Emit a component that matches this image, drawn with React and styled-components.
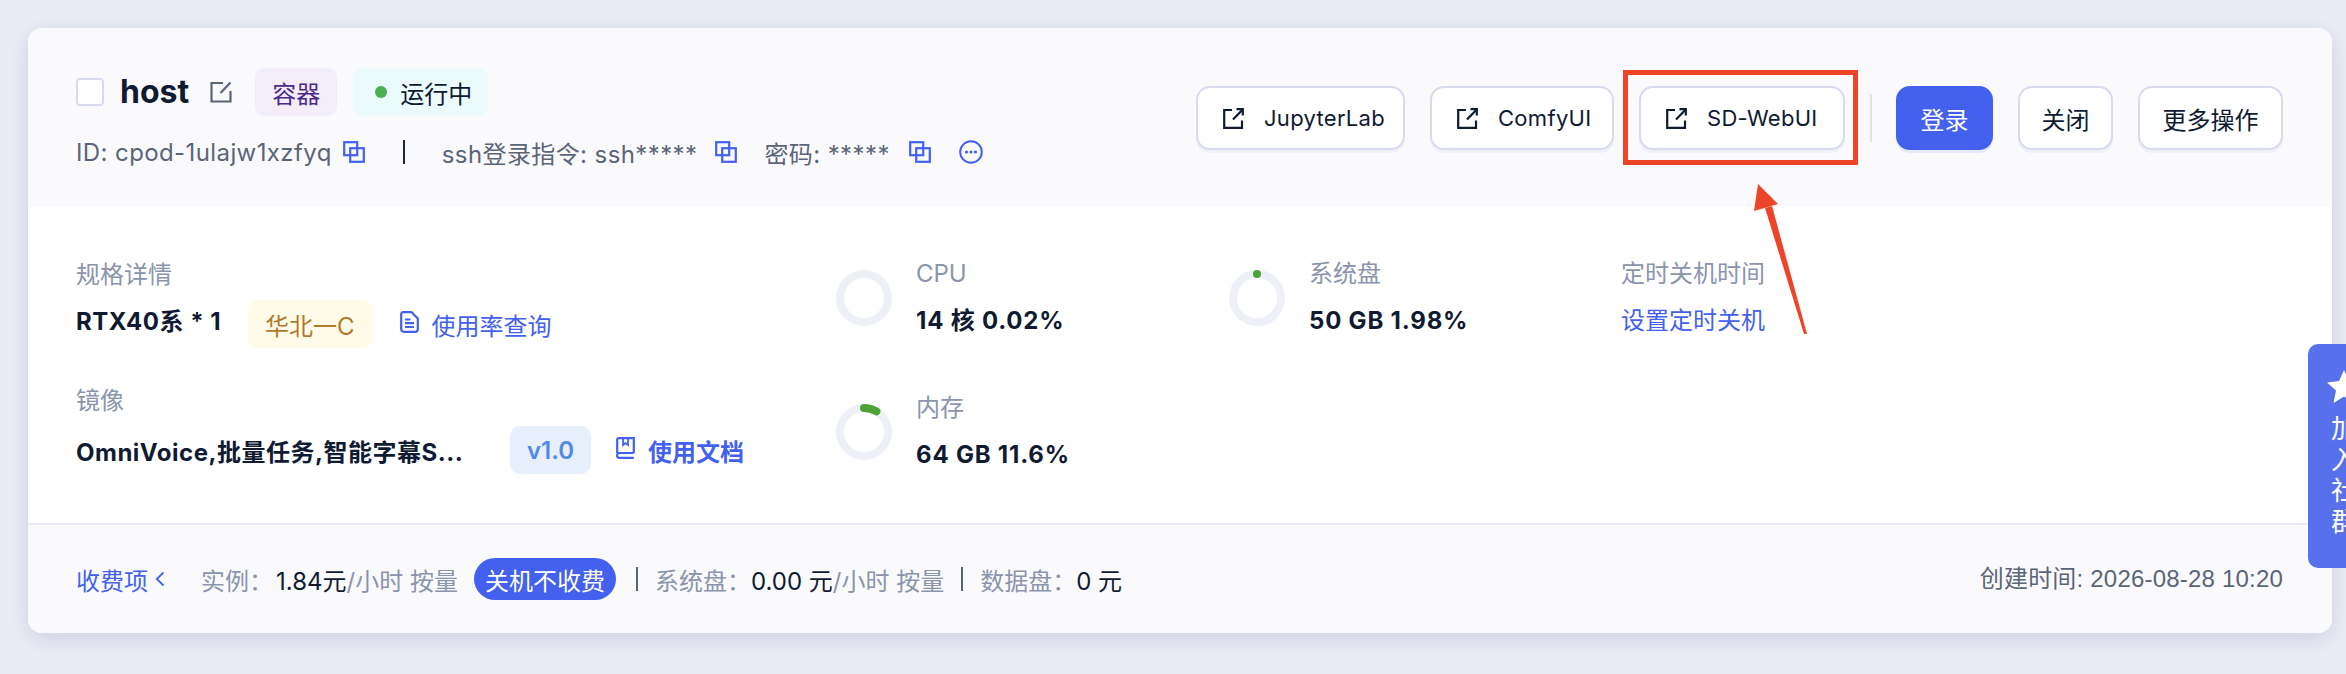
import React from 'react';
import styled, { createGlobalStyle } from 'styled-components';

const GlobalStyle = createGlobalStyle`
  html, body {
    margin: 0;
    padding: 0;
    background: #eaecf5;
  }
  body {
    font-family: "Inter", "Noto Sans CJK SC", sans-serif;
    color: #0f1a33;
    overflow: hidden;
  }
  * {
    box-sizing: border-box;
  }
`;

const Page = styled.div`
  position: relative;
  width: 2346px;
  height: 674px;
  padding: 28px 14px 0 28px;
  overflow: hidden;
`;

const Card = styled.div`
  position: relative;
  height: 605px;
  border-radius: 14px;
  background: #fff;
  box-shadow: 0 6px 24px rgba(70, 80, 130, 0.17);
`;

const Header = styled.header`
  display: flex;
  align-items: flex-start;
  justify-content: space-between;
  height: 179px;
  padding: 40px 49px 0 48px;
  background: #fafafd;
  border-radius: 14px 14px 0 0;
`;

const HeaderInfo = styled.div`
  display: flex;
  flex-direction: column;
  gap: 21px;
`;

const TitleRow = styled.div`
  display: flex;
  align-items: center;
  height: 48px;
`;

const Checkbox = styled.span`
  width: 28px;
  height: 28px;
  border: 2px solid #d8dbee;
  border-radius: 4px;
  background: #fff;
`;

const HostName = styled.h1`
  margin: 0 0 0 16px;
  font-size: 32px;
  font-weight: 700;
  line-height: 40px;
`;

const EditButton = styled.span`
  display: flex;
  margin: 0 23px 0 21px;
`;

const Tag = styled.span`
  display: inline-flex;
  align-items: center;
  height: 48px;
  padding: 0 ${props => props.$pad || 17}px;
  margin-right: ${props => props.$mr || 0}px;
  border-radius: 10px;
  font-size: 24px;
  font-weight: ${props => props.$weight || 400};
  background: ${props => props.$bg};
  color: ${props => props.$color};
  white-space: nowrap;
`;

const StatusTag = styled(Tag)`
  padding: 0 16px 0 22px;
`;

const Dot = styled.i`
  width: 12px;
  height: 12px;
  margin-right: 13px;
  border-radius: 50%;
  background: #4caf50;
`;

const MetaRow = styled.div`
  display: flex;
  align-items: center;
  height: 30px;
  font-size: 24px;
  letter-spacing: 0.4px;
  color: #5b6579;
  white-space: nowrap;
`;

const MetaIcon = styled.span`
  display: flex;
  margin-left: ${props => props.$ml || 0}px;
  margin-right: ${props => props.$mr || 0}px;
`;

const VLine = styled.span`
  width: 2px;
  height: 24px;
  margin: 0 37px 0 38px;
  background: #1d2740;
`;

const Actions = styled.div`
  display: flex;
  align-items: flex-start;
  gap: 25px;
  padding-top: 18px;
`;

const ActionButton = styled.button`
  display: flex;
  align-items: center;
  justify-content: center;
  width: ${props => props.$width}px;
  height: 64px;
  padding: 0;
  border: 2px solid ${props => (props.$primary ? '#4361ee' : '#d8dbee')};
  border-radius: 14px;
  background: ${props => (props.$primary ? '#4361ee' : '#fff')};
  box-shadow: 0 3px 0 ${props => (props.$primary ? '#e6e9fa' : '#eff0f8')};
  color: ${props => (props.$primary ? '#fff' : '#0f1a33')};
  font-family: inherit;
  font-size: 24px;
  white-space: nowrap;
`;

const LinkButton = styled(ActionButton)`
  justify-content: flex-start;
  gap: 20px;
  padding-left: 25px;
  font-size: 22px;
  letter-spacing: 0.3px;
`;

const ActionDivider = styled.span`
  width: 2px;
  height: 48px;
  margin: 8px -1px 0 0;
  background: #dfe1f0;
`;

const Body = styled.section`
  display: flex;
  height: 316px;
  padding: 52px 0 0 48px;
`;

const SpecColumn = styled.div`
  display: flex;
  flex-direction: column;
  width: 760px;
`;

const SpecLabel = styled.div`
  margin-top: ${props => props.$mt || 0}px;
  font-size: 24px;
  line-height: 30px;
  color: #8a94ad;
`;

const SpecRow = styled.div`
  display: flex;
  align-items: center;
  height: 48px;
  margin-top: ${props => props.$mt || 10}px;
`;

const SpecName = styled.span`
  width: ${props => props.$width}px;
  margin-bottom: ${props => props.$raise || 0}px;
  font-size: 24px;
  font-weight: 700;
  letter-spacing: 0.5px;
  white-space: nowrap;
`;

const DocLink = styled.a`
  display: inline-flex;
  align-items: center;
  gap: 13px;
  margin-left: ${props => props.$ml}px;
  color: #4361ee;
  font-size: 24px;
  font-weight: ${props => props.$weight || 400};

  svg {
    margin-bottom: 4px;
  }
`;

const Stats = styled.div`
  display: grid;
  grid-template-columns: 393px 392px auto;
  grid-template-rows: 134px 134px;
  justify-content: start;
`;

const StatCell = styled.div`
  display: flex;
  align-items: flex-start;
  gap: 24px;
`;

const Ring = styled.svg`
  flex: none;
  margin-top: 11px;
`;

const StatText = styled.div`
  display: flex;
  flex-direction: column;
  gap: 17px;
  font-size: 24px;
  line-height: 30px;
  white-space: nowrap;
`;

const StatLabel = styled.span`
  color: #8a94ad;
`;

const StatValue = styled.span`
  font-weight: 700;
  letter-spacing: 0.8px;
`;

const StatLink = styled.a`
  color: #4361ee;
`;

const Footer = styled.footer`
  display: flex;
  align-items: center;
  justify-content: space-between;
  height: 110px;
  padding: 0 49px 0 48px;
  border-top: 2px solid #e9eaf3;
  border-radius: 0 0 14px 14px;
  background: #fafafc;
  font-size: 24px;
  white-space: nowrap;
`;

const FeeList = styled.div`
  display: flex;
  align-items: center;
  color: #8a94ad;
`;

const FeeToggle = styled.a`
  display: inline-flex;
  align-items: center;
  gap: 7px;
  margin-right: 36px;
  color: #4361ee;
`;

const FeeValue = styled.span`
  margin-left: ${props => props.$ml || 0}px;
  color: #0f1a33;
`;

const FreePill = styled.span`
  display: inline-flex;
  align-items: center;
  height: 42px;
  margin: 0 20px 0 16px;
  padding: 0 11px;
  border-radius: 21px;
  background: #4361ee;
  color: #fff;
`;

const FeeDivider = styled.span`
  width: 2px;
  height: 24px;
  margin: 0 17px 0 0;
  background: #5b6579;
`;

const FeeSep = styled(FeeDivider)`
  margin: 0 17px 0 17px;
`;

const CreatedAt = styled.span`
  margin-bottom: 5px;
  font-family: "Liberation Sans", "Noto Sans CJK SC", sans-serif;
  letter-spacing: 0.2px;
  color: #5b6579;
`;

const SideTab = styled.aside`
  position: absolute;
  top: 344px;
  right: 0;
  width: 38px;
  height: 224px;
  padding: 26px 0 0 19px;
  overflow: hidden;
  border-radius: 10px 0 0 10px;
  background: #5870ec;
  color: #fff;
  font-size: 26px;
  line-height: 31px;
`;

const SideText = styled.div`
  width: 26px;
  margin: 4px 0 0 4px;
`;

const RedBox = styled.div`
  position: absolute;
  left: 1595px;
  top: 42px;
  width: 235px;
  height: 95px;
  border: 5px solid #ee4528;
`;

const Arrow = styled.svg`
  position: absolute;
  left: 1720px;
  top: 150px;
`;

const BLUE = '#4361ee';

const CopyIcon = () => (
  <svg width="22" height="22" viewBox="0 0 22 22" fill="none" stroke={BLUE} strokeWidth="2.2">
    <rect x="1.2" y="1.2" width="13" height="13" />
    <rect x="7.2" y="7.2" width="13.6" height="13.6" />
  </svg>
);

const MoreIcon = () => (
  <svg width="24" height="24" viewBox="0 0 24 24" fill="none" stroke={BLUE} strokeWidth="2">
    <circle cx="12" cy="12" r="10.8" />
    <g fill={BLUE} stroke="none">
      <circle cx="7.5" cy="12" r="1.6" />
      <circle cx="12" cy="12" r="1.6" />
      <circle cx="16.5" cy="12" r="1.6" />
    </g>
  </svg>
);

const EditIcon = () => (
  <svg width="22" height="22" viewBox="0 0 22 22" fill="none" stroke="#5b6579" strokeWidth="2.2">
    <path d="M13 2H1.5v18.5H20.5V10" />
    <path d="M10.5 12L20.5 1.5" />
  </svg>
);

const ExternalIcon = () => (
  <svg width="21" height="21" viewBox="0 0 21 21" fill="none" stroke="#0f1a33" strokeWidth="2.2">
    <path d="M9 2H1.2V19.8H19V12.5" />
    <path d="M10 11.5L19.5 1.8" />
    <path d="M13.5 1.2H19.8V7.5" />
  </svg>
);

const DocIcon = () => (
  <svg width="19" height="22" viewBox="0 0 19 22" fill="none" stroke={BLUE} strokeWidth="2.2">
    <path d="M3 1.2H11.5L17.8 7.5V18.3a2.5 2.5 0 0 1-2.5 2.5H3.7a2.5 2.5 0 0 1-2.5-2.5V3a1.8 1.8 0 0 1 1.8-1.8Z" />
    <path d="M5 8.5H10.5M5 12.2H14M5 16H14" />
  </svg>
);

const BookIcon = () => (
  <svg width="19" height="22" viewBox="0 0 19 22" fill="none" stroke={BLUE} strokeWidth="2.2">
    <path d="M1.2 16V2.7a1.5 1.5 0 0 1 1.5-1.5H17.8V16" />
    <path d="M17.8 16H3.5a2.4 2.4 0 0 0 0 4.8H17.8" />
    <path d="M7 1.5V8L9.500 6.200L12 8V1.500" strokeWidth="1.800" />
  </svg>
);

const UsageRing = ({ percent }) => {
  const r = 24;
  const length = 2 * Math.PI * r;
  // the round caps already add length, so the dash is trimmed a little
  const dash = Math.max(0, (length * percent) / 100 - 4.5);
  return (
    <Ring width="56" height="56" viewBox="0 0 56 56" fill="none" strokeWidth="8">
      <circle cx="28" cy="28" r={r} stroke="#eef0f8" />
      {percent > 0.1 && (
        <circle
          cx="28"
          cy="28"
          r={r}
          stroke="#4ca336"
          strokeLinecap="round"
          strokeDasharray={`${dash} ${length}`}
          transform="rotate(-90 28 28)"
        />
      )}
    </Ring>
  );
};

const Stat = ({ label, value, percent }) => (
  <StatCell>
    <UsageRing percent={percent} />
    <StatText>
      <StatLabel>{label}</StatLabel>
      <StatValue>{value}</StatValue>
    </StatText>
  </StatCell>
);

export default function App() {
  return (
    <Page>
      <GlobalStyle />
      <Card>
        <Header>
          <HeaderInfo>
            <TitleRow>
              <Checkbox />
              <HostName>host</HostName>
              <EditButton><EditIcon /></EditButton>
              <Tag $bg="#f3ecf9" $color="#4b2a8a" $mr={16}>容器</Tag>
              <StatusTag $bg="#ebfbfc" $color="#0f1a33">
                <Dot />
                运行中
              </StatusTag>
            </TitleRow>
            <MetaRow>
              ID: cpod-1ulajw1xzfyq
              <MetaIcon $ml={11}><CopyIcon /></MetaIcon>
              <VLine />
              ssh登录指令: ssh*****
              <MetaIcon $ml={18} $mr={27}><CopyIcon /></MetaIcon>
              密码: *****
              <MetaIcon $ml={19} $mr={28}><CopyIcon /></MetaIcon>
              <MetaIcon><MoreIcon /></MetaIcon>
            </MetaRow>
          </HeaderInfo>
          <Actions>
            <LinkButton $width={209}><ExternalIcon />JupyterLab</LinkButton>
            <LinkButton $width={184}><ExternalIcon />ComfyUI</LinkButton>
            <LinkButton $width={206}><ExternalIcon />SD-WebUI</LinkButton>
            <ActionDivider />
            <ActionButton $primary $width={97}>登录</ActionButton>
            <ActionButton $width={95}>关闭</ActionButton>
            <ActionButton $width={145}>更多操作</ActionButton>
          </Actions>
        </Header>

        <Body>
          <SpecColumn>
            <SpecLabel $mt={1}>规格详情</SpecLabel>
            <SpecRow>
              <SpecName $width={172} $raise={10}>RTX40系 * 1</SpecName>
              <Tag $bg="#fffbe8" $color="#b07a2a">华北一C</Tag>
              <DocLink $ml={28}><DocIcon />使用率查询</DocLink>
            </SpecRow>
            <SpecLabel $mt={38}>镜像</SpecLabel>
            <SpecRow>
              <SpecName $width={434}>OmniVoice,批量任务,智能字幕S...</SpecName>
              <Tag $bg="#e8effc" $color="#4f8ae6" $weight={600}>v1.0</Tag>
              <DocLink $ml={25} $weight={600}><BookIcon />使用文档</DocLink>
            </SpecRow>
          </SpecColumn>
          <Stats>
            <Stat label="CPU" value="14 核 0.02%" percent={0.02} />
            <Stat label="系统盘" value="50 GB 1.98%" percent={1.98} />
            <StatText>
              <StatLabel>定时关机时间</StatLabel>
              <StatLink>设置定时关机</StatLink>
            </StatText>
            <Stat label="内存" value="64 GB 11.6%" percent={11.6} />
          </Stats>
        </Body>

        <Footer>
          <FeeList>
            <FeeToggle>
              收费项
              <svg width="10" height="16" viewBox="0 0 10 16" fill="none" stroke={BLUE} strokeWidth="1.8">
                <path d="M8.5 1.5L1.8 8l6.7 6.5" />
              </svg>
            </FeeToggle>
            实例：
            <FeeValue $ml={3}>1.84元</FeeValue>/小时 按量
            <FreePill>关机不收费</FreePill>
            <FeeDivider />
            系统盘：
            <FeeValue>0.00 元</FeeValue>/小时 按量
            <FeeSep />
            数据盘：
            <FeeValue>0 元</FeeValue>
          </FeeList>
          <CreatedAt>创建时间: 2026-08-28 10:20</CreatedAt>
        </Footer>

        <RedBox />
        <Arrow width="70" height="165" viewBox="0 0 70 165">
          <polygon points="10,6 6,33 30,26" fill="#ee4528" />
          <polygon points="17,30 24,28 59,156 56,156" fill="#ee4528" />
        </Arrow>
      </Card>

      <SideTab>
        <svg width="34" height="33" viewBox="0 0 34 33" fill="#fff">
          <polygon points="17,0 22,11 34,12.5 25,20.5 27.5,33 17,26.5 6.500,33 9,20.5 0,12.5 12,11" />
        </svg>
        <SideText>加入社群</SideText>
      </SideTab>
    </Page>
  );
}
